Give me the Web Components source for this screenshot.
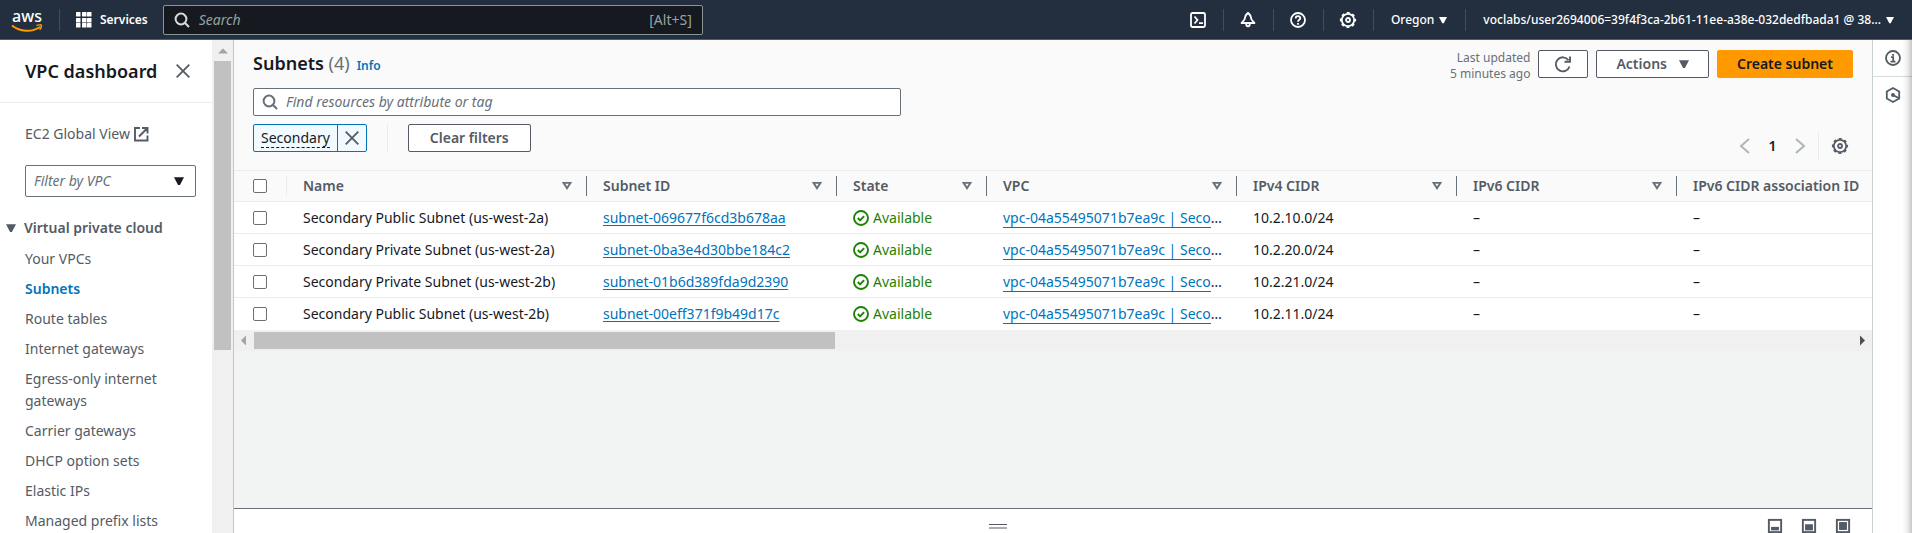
<!DOCTYPE html>
<html lang="en">
<head>
<meta charset="utf-8">
<title>Subnets | VPC Management Console</title>
<style>
  html, body { margin: 0; height: 100%; }
  body {
    font: 400 14px/22px "Noto Sans", "Open Sans", sans-serif;
    color: #16191f;
    background: #f2f3f3;
    --line: #eaeded;
    --edge: #d5dbdb;
    --grey: #545b64;
    --mute: #687078;
    --blue: #0073bb;
  }
</style>
</head>
<body>
<console-app></console-app>

<template id="console-app">
  <style>
    :host { display: flex; flex-direction: column; height: 100vh; overflow: hidden; }
    .body { display: flex; flex: 1; min-height: 0; }
    main { flex: 1; min-width: 0; display: flex; flex-direction: column; }
    .page { flex: 1; min-height: 0; overflow: hidden; }
  </style>
  <top-bar></top-bar>
  <div class="body">
    <side-nav heading="VPC dashboard">
      <nav-link>Your VPCs</nav-link>
      <nav-link current>Subnets</nav-link>
      <nav-link>Route tables</nav-link>
      <nav-link>Internet gateways</nav-link>
      <nav-link>Egress-only internet gateways</nav-link>
      <nav-link>Carrier gateways</nav-link>
      <nav-link>DHCP option sets</nav-link>
      <nav-link>Elastic IPs</nav-link>
      <nav-link>Managed prefix lists</nav-link>
    </side-nav>
    <main>
      <div class="page">
        <subnets-header></subnets-header>
        <subnets-table></subnets-table>
      </div>
      <split-panel></split-panel>
    </main>
    <tool-rail></tool-rail>
  </div>
</template>

<template id="top-bar">
  <style>
    :host { display: flex; align-items: center; height: 39px; flex: none; background: #232f3e; border-bottom: 1px solid #545b64; color: #fff; font-size: 12px; font-weight: 500; line-height: 20px; }
    .logo { display: flex; flex-direction: column; align-items: center; width: 32px; margin: 0 16px 0 11px; color: #fff; text-decoration: none; font-size: 16px; font-weight: 500; line-height: 16px; }
    .logo svg { display: block; }
    .rule { width: 1px; height: 22px; background: #414d5c; }
    button { all: unset; box-sizing: border-box; display: flex; align-items: center; justify-content: center; cursor: pointer; white-space: nowrap; }
    .services { gap: 8px; padding: 0 15px 0 16px; font-weight: 600; }
    .search { display: flex; align-items: center; box-sizing: border-box; width: 540px; height: 30px; padding: 0 10px 0 10px; gap: 9px; background: #16191f; border: 1px solid #879596; border-radius: 2px; color: #d5dbdb; font-size: 14px; font-weight: 400; }
    input { all: unset; flex: 1; min-width: 0; font: italic 400 14px/22px "Noto Sans", sans-serif; color: #fff; }
    input::placeholder { color: #95a5a6; opacity: 1; }
    kbd { font: inherit; color: #95a5a6; }
    .grow { flex: 1; }
    .icon { width: 49px; height: 30px; }
    .text { gap: 5px; padding: 0 18px 0 17px; }
  </style>
  <a class="logo" href="#" aria-label="AWS home">aws
    <svg width="32" height="8" viewBox="0 0 32 8" fill="none" stroke="#ff9900"><path d="M1 1.5C9 8 21 8.500 29 3" stroke-width="1.900"/><path d="M25.500 1.500c2-.8 5-.8 5-.2s-.6 3.200-1.800 4.500" stroke-width="1.500"/></svg>
  </a>
  <span class="rule"></span>
  <button class="services"><ui-icon name="grid"></ui-icon>Services</button>
  <label class="search"><ui-icon name="search"></ui-icon><input type="text" placeholder="Search" aria-label="Search"><kbd>[Alt+S]</kbd></label>
  <span class="grow"></span>
  <button class="icon" aria-label="CloudShell"><ui-icon name="shell"></ui-icon></button><span class="rule"></span>
  <button class="icon" aria-label="Notifications"><ui-icon name="bell"></ui-icon></button><span class="rule"></span>
  <button class="icon" aria-label="Support"><ui-icon name="help"></ui-icon></button><span class="rule"></span>
  <button class="icon" aria-label="Settings"><ui-icon name="gear"></ui-icon></button><span class="rule"></span>
  <button class="text">Oregon<ui-icon name="caret" size="8"></ui-icon></button><span class="rule"></span>
  <button class="text">voclabs/user2694006=39f4f3ca-2b61-11ee-a38e-032dedfbada1 @ 38...<ui-icon name="caret" size="8"></ui-icon></button>
</template>

<template id="side-nav">
  <style>
    :host { display: flex; width: 233px; flex: none; background: #fff; border-right: 1px solid #bfc6c6; color: var(--grey); overflow: hidden; }
    nav { flex: 1; min-width: 0; overflow: hidden; }
    .head { display: flex; align-items: center; justify-content: space-between; height: 62px; padding: 0 21px 0 25px; border-bottom: 1px solid var(--line); }
    h2 { margin: 0; font-size: 18px; line-height: 22px; font-weight: 600; color: #16191f; white-space: nowrap; }
    button { all: unset; display: flex; cursor: pointer; }
    .global { display: flex; align-items: center; gap: 3px; margin: 20px 25px; color: inherit; text-decoration: none; white-space: nowrap; }
    .pick { display: grid; align-items: center; margin: 0 16px 20px 25px; color: #16191f; }
    .pick > * { grid-area: 1 / 1; }
    .pick ui-icon { justify-self: end; margin-right: 12px; pointer-events: none; }
    select { appearance: none; box-sizing: border-box; width: 100%; height: 32px; padding: 0 8px; margin: 0; border: 1px solid var(--mute); border-radius: 2px; background: #fff; font: italic 400 14px/22px "Noto Sans", sans-serif; color: var(--mute); }
    .group { display: flex; align-items: center; gap: 8px; margin-left: 6px; font-weight: 600; white-space: nowrap; }
    .links { display: flex; flex-direction: column; gap: 8px; padding: 9px 25px; }
    .bar { width: 21px; background: #f0f0f0; display: flex; flex-direction: column; align-items: center; color: #a3a3a3; }
    .bar ui-icon { margin: 6px 0 5px; }
    .thumb { width: 17px; height: 289px; background: #c1c1c1; }
  </style>
  <nav>
    <div class="head"><h2></h2><button aria-label="Close navigation"><ui-icon name="close"></ui-icon></button></div>
    <a class="global" href="#">EC2 Global View<ui-icon name="external"></ui-icon></a>
    <div class="pick"><select aria-label="Filter by VPC"><option>Filter by VPC</option></select><ui-icon name="caret" size="10"></ui-icon></div>
    <div class="group"><ui-icon name="caret" size="10"></ui-icon>Virtual private cloud</div>
    <div class="links"><slot></slot></div>
  </nav>
  <div class="bar"><ui-icon name="up" size="10"></ui-icon><div class="thumb"></div></div>
</template>

<template id="nav-link">
  <style>
    :host { display: block; color: var(--grey); }
    :host([current]) { color: var(--blue); font-weight: 600; }
    a { color: inherit; text-decoration: none; }
  </style>
  <a href="#"><slot></slot></a>
</template>

<template id="ui-button">
  <style>
    :host { display: inline-flex; }
    button { box-sizing: border-box; display: flex; align-items: center; justify-content: center; gap: 12px; height: 28px; padding: 0 21px; border: 1px solid var(--grey); border-radius: 2px; background: #fff; color: var(--grey); font: 600 14px/20px "Noto Sans", sans-serif; white-space: nowrap; cursor: pointer; }
    :host([compact]) button { padding: 0 19px; }
    :host([primary]) button { background: #ff9900; border-color: #ff9900; color: #16191f; }
    :host([icon]) button { padding: 0 16px; }
  </style>
  <button><slot></slot></button>
</template>

<template id="subnets-header">
  <style>
    :host { display: block; padding: 10px 19px; background: #fafafa; }
    .top { display: flex; align-items: center; height: 28px; gap: 8px; margin-bottom: 10px; }
    .title { display: flex; align-items: baseline; gap: 7px; }
    h1 { margin: 0; font-size: 18px; line-height: 22px; font-weight: 600; white-space: nowrap; }
    h1 span { font-weight: 400; color: var(--mute); }
    .info { color: var(--blue); font-size: 12px; font-weight: 600; text-decoration: none; }
    .updated { flex: 1; text-align: right; font-size: 12px; line-height: 16px; padding-top: 4px; color: var(--mute); }
    .tools { display: flex; align-items: flex-end; justify-content: space-between; }
    .left { display: flex; flex-direction: column; gap: 8px; flex: 1; max-width: 648px; padding-bottom: 8px; }
    .find { display: flex; align-items: center; gap: 8px; box-sizing: border-box; height: 28px; padding: 0 8px; border: 1px solid var(--mute); border-radius: 2px; background: #fff; color: var(--mute); }
    input { all: unset; flex: 1; min-width: 0; font: italic 400 14px/22px "Noto Sans", sans-serif; color: #16191f; }
    input::placeholder { color: var(--mute); opacity: 1; }
    .filters { display: flex; gap: 20px; height: 28px; }
    .token { display: flex; box-sizing: border-box; border: 1px solid var(--blue); border-radius: 2px; background: #f1faff; }
    .token button { all: unset; display: flex; align-items: center; cursor: pointer; }
    .token .name { padding: 0 7px; }
    .token .name span { line-height: 18px; border-bottom: 1px dashed #16191f; }
    .token .drop { padding: 0 6px; border-left: 1px solid var(--blue); color: var(--grey); }
    .rule { width: 1px; background: var(--line); }
    .pages { display: flex; align-items: center; height: 28px; color: #aab7b8; font-size: 14px; font-weight: 600; }
    .pages button { all: unset; display: flex; justify-content: center; width: 24px; cursor: pointer; }
    .pages .num { width: 31px; color: #16191f; }
    .pages .rule { height: 28px; margin: 0 8px 0 6px; }
    .pages .gear { width: 26px; color: var(--grey); }
  </style>
  <div class="top">
    <div class="title"><h1>Subnets <span>(4)</span></h1><a class="info" href="#">Info</a></div>
    <div class="updated">Last updated<br>5 minutes ago</div>
    <ui-button icon aria-label="Refresh"><ui-icon name="refresh"></ui-icon></ui-button>
    <ui-button compact>Actions<ui-icon name="caret" size="10"></ui-icon></ui-button>
    <ui-button compact primary>Create subnet</ui-button>
  </div>
  <div class="tools">
    <div class="left">
      <label class="find"><ui-icon name="search"></ui-icon><input type="text" placeholder="Find resources by attribute or tag" aria-label="Find resources by attribute or tag"></label>
      <div class="filters">
        <div class="token"><button class="name"><span>Secondary</span></button><button class="drop" aria-label="Remove filter"><ui-icon name="close"></ui-icon></button></div>
        <span class="rule"></span>
        <ui-button>Clear filters</ui-button>
      </div>
    </div>
    <div class="pages">
      <button aria-label="Previous page"><ui-icon name="left"></ui-icon></button>
      <button class="num">1</button>
      <button aria-label="Next page"><ui-icon name="right"></ui-icon></button>
      <span class="rule"></span>
      <button class="gear" aria-label="Preferences"><ui-icon name="gear"></ui-icon></button>
    </div>
  </div>
</template>

<template id="subnets-table">
  <style>
    :host { display: block; }
    .scroll { overflow: hidden; border-top: 1px solid var(--line); background: #fff; }
    table { table-layout: fixed; width: 1663px; border-collapse: separate; border-spacing: 0; }
    th, td { padding: 0 0 0 16px; height: 31px; border-bottom: 1px solid var(--line); text-align: left; white-space: nowrap; overflow: hidden; }
    th { height: 30px; background: #fafafa; color: var(--grey); font-weight: 600; }
    tr:last-child td { border-bottom: 0; height: 32px; }
    th:first-child, td:first-child { padding-left: 19px; }
    th div { display: flex; align-items: center; justify-content: space-between; height: 20px; padding-right: 14px; border-right: 1px solid var(--mute); }
    th:first-child div { border-color: var(--line); }
    th ui-icon { color: var(--mute); }
    input { appearance: none; box-sizing: border-box; display: block; width: 14px; height: 14px; margin: 0; border: 1px solid var(--mute); border-radius: 2px; background: #fff; }
    a { color: var(--blue); text-underline-offset: 2px; }
    .vpc a { text-decoration: none; border-bottom: 1px solid var(--blue); }
    .ok { display: flex; align-items: center; gap: 4px; color: #1d8102; }
    .bar { display: flex; align-items: center; height: 21px; padding: 0 7px; background: #f0f0f0; color: #a3a3a3; gap: 8px; }
    .track { flex: 1; display: grid; grid-template-columns: 4fr 7fr; }
    .thumb { height: 17px; background: #c1c1c1; }
    .end { color: #505050; }
  </style>
  <div class="scroll">
    <table>
      <colgroup><col style="width:53px"><col style="width:300px"><col style="width:250px"><col style="width:150px"><col style="width:250px"><col style="width:220px"><col style="width:220px"><col style="width:220px"></colgroup>
      <thead><tr></tr></thead>
      <tbody></tbody>
    </table>
  </div>
  <div class="bar"><ui-icon name="sleft" size="5"></ui-icon><div class="track"><div class="thumb"></div></div><ui-icon class="end" name="sright" size="5"></ui-icon></div>
</template>

<template id="split-panel">
  <style>
    :host { display: grid; grid-template-columns: 1fr auto; height: 24px; flex: none; border-top: 1px solid var(--mute); background: #fff; color: var(--grey); overflow: hidden; }
    .grip { all: unset; justify-self: center; align-self: start; width: 18px; height: 2px; margin-top: 15px; border-top: 1px solid var(--grey); border-bottom: 2px solid #a9adb1; cursor: row-resize; }
    .sizes { display: flex; gap: 20px; padding: 10px 22px 0 6px; }
    .sizes button { all: unset; display: block; cursor: pointer; }
  </style>
  <button class="grip" aria-label="Resize panel"></button>
  <div class="sizes">
    <button aria-label="Small panel"><ui-icon name="p1" size="14"></ui-icon></button>
    <button aria-label="Medium panel"><ui-icon name="p2" size="14"></ui-icon></button>
    <button aria-label="Full panel"><ui-icon name="p3" size="14"></ui-icon></button>
  </div>
</template>

<template id="tool-rail">
  <style>
    :host { display: block; position: relative; width: 39px; flex: none; border-left: 1px solid #c9d0d0; background: #fff; color: var(--grey); }
    :host::after { content: ""; position: absolute; top: 0; right: 0; bottom: 0; width: 10px; background: linear-gradient(to right, transparent, rgba(0,0,0,.06) 50%, rgba(0,0,0,.22)); pointer-events: none; }
    button { all: unset; box-sizing: border-box; display: flex; align-items: center; justify-content: center; width: 100%; height: 36px; cursor: pointer; }
    button:first-of-type { border-bottom: 1px solid var(--edge); height: 37px; }
  </style>
  <button aria-label="Info"><ui-icon name="info"></ui-icon></button>
  <button aria-label="Diagnostics"><ui-icon name="hex"></ui-icon></button>
</template>

<script>
const ICONS = {
  grid: '<g fill="currentColor">' + [0, 6, 11].flatMap(y => [0, 6, 11].map(x => `<rect x="${x}" y="${y}" width="4.500" height="4.500" rx=".6"/>`)).join('') + '</g>',
  search: '<g fill="none" stroke="currentColor" stroke-width="2"><circle cx="7" cy="7" r="5.400"/><path d="M10.800 10.800l4.200 4.200"/></g>',
  shell: '<g fill="none" stroke="currentColor" stroke-width="1.800"><rect x="1" y="1" width="14" height="14" rx="1.500"/><path d="M4.500 4.500L7.500 8l-3 3.500M9 11.200h4"/></g>',
  bell: '<g fill="none" stroke="currentColor" stroke-width="1.800" stroke-linejoin="round"><path d="M8 1.500C5 2 5.300 5.500 4.500 7.500L1.500 11h13l-3-3.500C10.700 5.500 11 2 8 1.500z"/><path d="M6.200 11.800a1.800 2.600 0 003.600 0"/></g><path d="M8 0v2" stroke="currentColor" stroke-width="2"/>',
  help: '<g fill="none" stroke="currentColor" stroke-width="1.800"><circle cx="8" cy="8" r="7"/><path d="M5.700 6.500C5.700 3.400 10.300 3.500 10.300 6.200 10.300 7.800 8 7.800 8 9.800M8 11v1.800"/></g>',
  gear: '<g fill="none" stroke="currentColor"><circle cx="8" cy="8" r="6.200" stroke-width="1.800"/><circle cx="8" cy="8" r="7.300" stroke-width="1.600" stroke-dasharray="2.866 2.866" stroke-dashoffset="1.433"/><circle cx="8" cy="8" r="2" stroke-width="1.800"/></g>',
  caret: '<path fill="currentColor" d="M0 2h16L9.500 14.500h-3z"/>',
  up: '<path fill="currentColor" d="M0 12h16L8 4z"/>',
  sleft: '<path fill="currentColor" d="M16 -8v32L0 8z"/>',
  sright: '<path fill="currentColor" d="M0 -8v32L16 8z"/>',
  close: '<path fill="none" stroke="currentColor" stroke-width="1.800" d="M1.700 1.700l12.600 12.600M14.300 1.700L1.700 14.300"/>',
  external: '<g fill="none" stroke="currentColor" stroke-width="1.900"><path d="M7 2H2v12.500h12.500V9.500M9 2h5.500v5.500M14 2.500L6 10.500"/></g>',
  refresh: '<g fill="none" stroke="currentColor" stroke-width="1.900"><path d="M14.500 10.500A7 7 0 1113.500 4.200"/><path d="M15 .5v5.300H9.500"/></g>',
  left: '<path fill="none" stroke="currentColor" stroke-width="2" d="M12 1L4 8l8 7"/>',
  right: '<path fill="none" stroke="currentColor" stroke-width="2" d="M4 1l8 7-8 7"/>',
  sort: '<path fill="none" stroke="currentColor" stroke-width="3" d="M2.500 3h11L8 11.500z"/>',
  check: '<g fill="none" stroke="currentColor" stroke-width="1.900"><circle cx="8" cy="8" r="7"/><path d="M4.800 8l2.300 2.300 4-4.200"/></g>',
  info: '<g fill="none" stroke="currentColor" stroke-width="1.800"><circle cx="8" cy="8" r="7"/><path d="M6 7.200h2.200V12M5.500 11.600h5M7.100 4.800h2"/></g>',
  hex: '<g fill="none" stroke="currentColor" stroke-width="1.800"><path d="M8 1l6.200 3.500v7L8 15l-6.200-3.500v-7z"/><path d="M8 8l5.500 3"/></g><circle cx="8" cy="8" r="2" fill="currentColor"/>'
};
[['p1', 9, 4], ['p2', 6, 7], ['p3', 3.5, 9]].forEach(([n, y, h]) => {
  ICONS[n] = `<rect x="1" y="1" width="14" height="14" fill="none" stroke="currentColor" stroke-width="2.200"/><rect x="3.500" y="${y}" width="9" height="${h}" fill="currentColor"/>`;
});

function define(name, setup) {
  customElements.define(name, class extends HTMLElement {
    connectedCallback() {
      if (this.shadowRoot) return;
      const root = this.attachShadow({ mode: 'open' });
      root.append(document.getElementById(name).content.cloneNode(true));
      if (setup) setup(root, this);
    }
  });
}

customElements.define('ui-icon', class extends HTMLElement {
  connectedCallback() {
    if (this.shadowRoot) return;
    const size = this.getAttribute('size') || 16;
    this.attachShadow({ mode: 'open' }).innerHTML =
      `<style>:host{display:block;flex:none}svg{display:block;overflow:visible}</style>
       <svg width="${size}" height="${size}" viewBox="0 0 16 16" aria-hidden="true">${ICONS[this.getAttribute('name')]}</svg>`;
  }
});

define('nav-link');
define('ui-button', (root, host) => {
  if (host.hasAttribute('aria-label')) root.querySelector('button').setAttribute('aria-label', host.getAttribute('aria-label'));
});
define('top-bar');
define('side-nav', (root, host) => { root.querySelector('h2').textContent = host.getAttribute('heading'); });
define('subnets-header');
define('subnets-table', root => {
  const columns = ['Name', 'Subnet ID', 'State', 'VPC', 'IPv4 CIDR', 'IPv6 CIDR', 'IPv6 CIDR association ID'];
  const rows = [
    ['Secondary Public Subnet (us-west-2a)', 'subnet-069677f6cd3b678aa', '10.2.10.0/24'],
    ['Secondary Private Subnet (us-west-2a)', 'subnet-0ba3e4d30bbe184c2', '10.2.20.0/24'],
    ['Secondary Private Subnet (us-west-2b)', 'subnet-01b6d389fda9d2390', '10.2.21.0/24'],
    ['Secondary Public Subnet (us-west-2b)', 'subnet-00eff371f9b49d17c', '10.2.11.0/24']
  ];
  root.querySelector('thead tr').innerHTML =
    '<th><div><input type="checkbox" aria-label="Select all subnets"></div></th>' +
    columns.map(c => `<th scope="col"><div>${c}<ui-icon name="sort" size="10"></ui-icon></div></th>`).join('');
  root.querySelector('tbody').innerHTML = rows.map(([name, id, cidr]) => `<tr>
    <td><input type="checkbox" aria-label="Select ${id}"></td>
    <td>${name}</td>
    <td><a href="#">${id}</a></td>
    <td><span class="ok"><ui-icon name="check"></ui-icon>Available</span></td>
    <td class="vpc"><a href="#">vpc-04a55495071b7ea9c | Seco</a>…</td>
    <td>${cidr}</td><td>–</td><td>–</td></tr>`).join('');
});
define('split-panel');
define('tool-rail');
define('console-app');
</script>
</body>
</html>
